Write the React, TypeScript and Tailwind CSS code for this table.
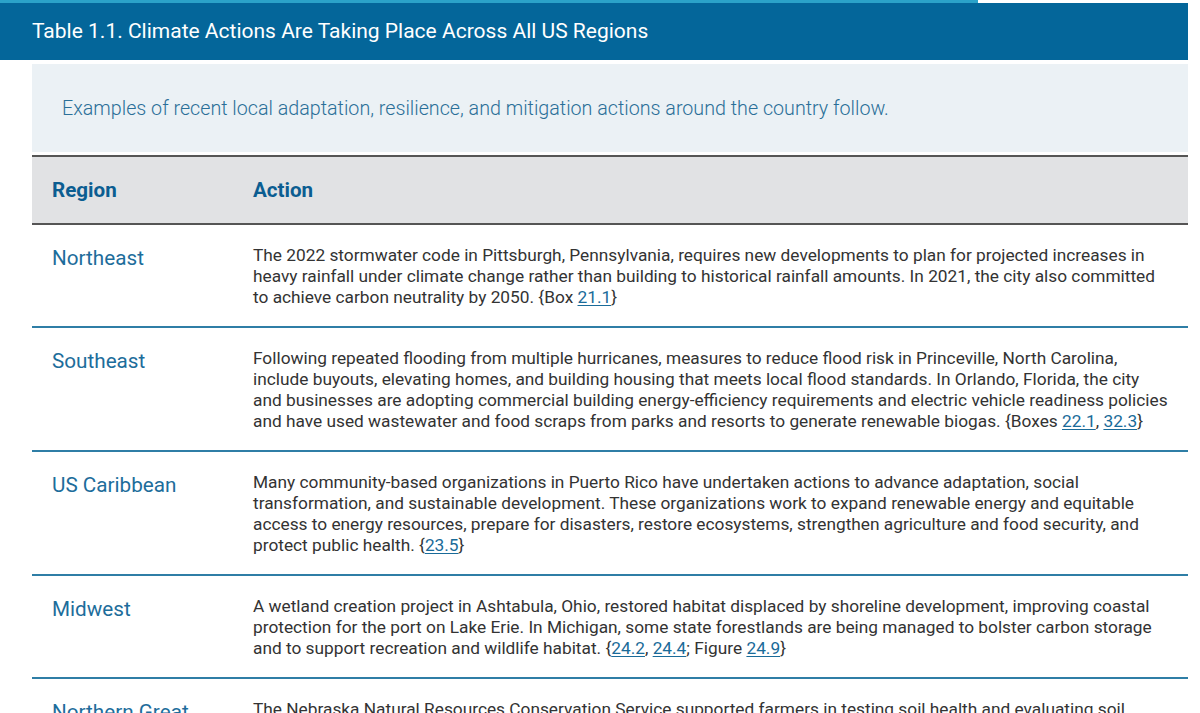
import { type ReactNode } from 'react';

interface Row {
    region: string;
    action: ReactNode;
}

const Ref = ({ children }: { children: ReactNode }) => (
    <a href="#" className="text-[#1a6b99] underline decoration-1 underline-offset-2">
        {children}
    </a>
);

const rows: Row[] = [
    {
        region: 'Northeast',
        action: (
            <>
                The 2022 stormwater code in Pittsburgh, Pennsylvania, requires new developments to plan for projected increases in heavy rainfall under climate change rather than building to historical rainfall amounts. In 2021, the city also committed to achieve carbon neutrality by 2050. {'{'}Box <Ref>21.1</Ref>{'}'}
            </>
        ),
    },
    {
        region: 'Southeast',
        action: (
            <>
                Following repeated flooding from multiple hurricanes, measures to reduce flood risk in Princeville, North Carolina, include buyouts, elevating homes, and building housing that meets local flood standards. In Orlando, Florida, the city and businesses are adopting commercial building energy-efficiency requirements and electric vehicle readiness policies and have used wastewater and food scraps from parks and resorts to generate renewable biogas. {'{'}Boxes <Ref>22.1</Ref>, <Ref>32.3</Ref>{'}'}
            </>
        ),
    },
    {
        region: 'US Caribbean',
        action: (
            <>
                Many community-based organizations in Puerto Rico have undertaken actions to advance adaptation, social transformation, and sustainable development. These organizations work to expand renewable energy and equitable access to energy resources, prepare for disasters, restore ecosystems, strengthen agriculture and food security, and protect public health. {'{'}<Ref>23.5</Ref>{'}'}
            </>
        ),
    },
    {
        region: 'Midwest',
        action: (
            <>
                A wetland creation project in Ashtabula, Ohio, restored habitat displaced by shoreline development, improving coastal protection for the port on Lake Erie. In Michigan, some state forestlands are being managed to bolster carbon storage and to support recreation and wildlife habitat. {'{'}<Ref>24.2</Ref>, <Ref>24.4</Ref>; Figure <Ref>24.9</Ref>{'}'}
            </>
        ),
    },
    {
        region: 'Northern Great Plains',
        action: (
            <>
                The Nebraska Natural Resources Conservation Service supported farmers in testing soil health and evaluating soil management practices that improve drought resilience and reduce greenhouse gas emissions across the region.
            </>
        ),
    },
];

export default function App() {
    return (
        <div className="h-[713px] overflow-hidden bg-white font-['Roboto',sans-serif]">
            <div className="flex h-[3px]">
                <div className="w-[978px] bg-[#2ba2c9]" />
            </div>
            <div className="mr-[12px] flex h-[57px] items-center bg-[#04669a] px-[32px]">
                <h2 className="text-[21px] text-white">Table 1.1. Climate Actions Are Taking Place Across All US Regions</h2>
            </div>

            <div className="mx-[32px] mr-[12px] mt-[4px]">
                <div className="flex h-[88px] items-center bg-[#ebf1f5] px-[30px] pt-[2px]">
                    <p className="text-[19.7px] font-light text-[#2a6f98]">
                        Examples of recent local adaptation, resilience, and mitigation actions around the country follow.
                    </p>
                </div>

                <table className="mt-[3px] w-full border-collapse">
                    <thead>
                        <tr className="h-[68px] border-y-2 border-[#555] bg-[#e1e2e4]">
                            <th className="w-[221px] pl-[20px] text-left text-[20.6px] font-bold text-[#0b5d91]">Region</th>
                            <th className="pr-[20px] text-left text-[20.6px] font-bold text-[#0b5d91]">Action</th>
                        </tr>
                    </thead>
                    <tbody>
                        {rows.map((row) => (
                            <tr key={row.region} className="border-b-2 border-[#2f7ea6]">
                                <td className="align-top pl-[20px] pt-[21px] pr-[12px] text-[20.7px] leading-[24px] text-[#1d6d9b]">
                                    {row.region}
                                </td>
                                <td className="align-top pb-[18px] pr-[18px] pt-[20px] text-[17.3px] leading-[21px] text-[#333]">
                                    {row.action}
                                </td>
                            </tr>
                        ))}
                    </tbody>
                </table>
            </div>
        </div>
    );
}
